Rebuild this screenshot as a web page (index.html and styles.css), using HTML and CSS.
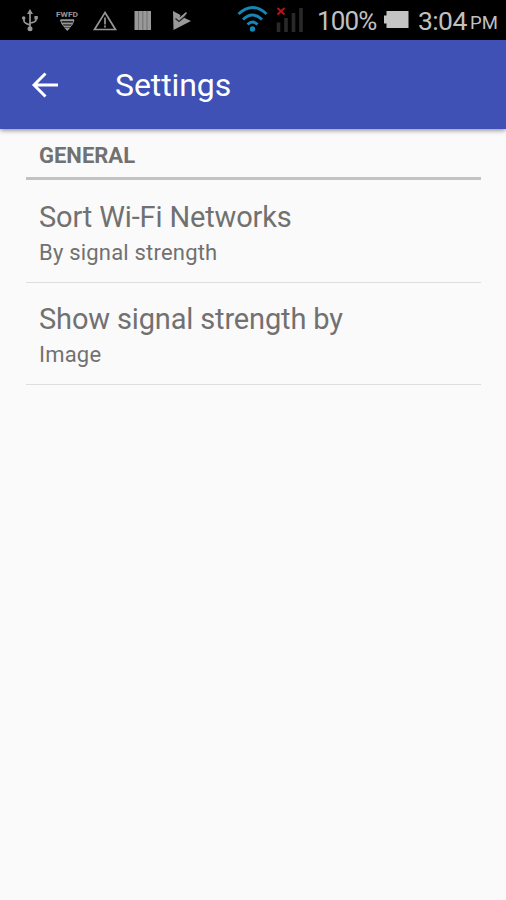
FILE: index.html
```html
<!DOCTYPE html>
<html lang="en">
<head>
<meta charset="utf-8">
<title>Settings</title>
<link rel="stylesheet" href="styles.css">
</head>
<body>
<div class="status">
  <svg class="notifications" width="180" height="24" viewBox="20 8 180 24" fill="none" stroke="#969696" stroke-width="1.7">
    <g>
      <path d="M30 13V28M24 17v4q0 2 6 4M36 17v3q0 2-6 3"/>
      <path d="M30 9l3 5h-6z" fill="#969696" stroke="none"/>
      <circle cx="30" cy="28.700" r="2.500" fill="#969696" stroke="none"/>
      <circle cx="23.700" cy="18" r="1.800" fill="#969696" stroke="none"/>
      <path d="M34.400 16h3.400v3.400h-3.400z" fill="#969696" stroke="none"/>
    </g>
    <g>
      <text class="badge-text" x="56" y="17" textLength="22" lengthAdjust="spacingAndGlyphs">FWFD</text>
      <path d="M60.500 20.300h13.500M62 23.600h10.500M64 26.600h6.500" stroke-width="2"/>
      <path d="M64.500 28h5.500l-2.700 3z" fill="#969696" stroke="none"/>
      <path d="M60.500 20l1.500 4 2.500 3M74 20l-1.500 4-2.500 3" stroke-width="1"/>
    </g>
    <path d="M105 12.500L115.500 29.500h-21zM105 17.500v7M105 25.500v2"/>
    <path d="M134.500 11H151v19h-16.500z" fill="#999" stroke="none"/>
    <path d="M138.500 11v19M142.800 11v19M147 11v19" stroke="#666" stroke-width=".8"/>
    <path d="M173 11l7.500 4-1 2.500 6.500-5.500 1 1-3.500 4.500 7.500 3.500-17.500 9z" fill="#999" stroke="none"/>
    <path d="M175.500 18.500l3.500 3 6.500-5.500" stroke="#222" stroke-width="1.200"/>
  </svg>
  <svg class="signal" width="68" height="28" viewBox="237 5 68 28" fill="none">
    <g stroke="#1686b6" stroke-width="2.900">
      <path d="M238.500 14Q252.500 1 266.500 14M243 19.500Q252.500 10.500 262 19.500M247.500 24.500Q252.500 19.500 257.500 24.500"/>
      <circle cx="252.500" cy="29" r="2.700" fill="#1686b6" stroke="none"/>
    </g>
    <path d="M278.500 32v-9.500M286 32V18M293.500 32V13M301 32V8" stroke="#292929" stroke-width="3.600"/>
    <path d="M277.500 8l7 6.500M284.500 8l-7 6.500" stroke="#b5161b" stroke-width="1.900"/>
  </svg>
  <span class="percent">100%</span>
  <svg class="battery" width="25" height="17" viewBox="0 0 25 17"><path d="M2.500 0H24.500V17H2.500V12.500H0V4.500H2.500z" fill="#c4c4c4"/></svg>
  <span class="clock">3:04</span>
  <span class="period">PM</span>
</div>
<header class="appbar">
  <svg class="back" width="28" height="26" viewBox="0 0 28 26" fill="none" stroke="#fff" stroke-width="2.900"><path d="M14.500 1.500L3 13l11.500 11.500M3 13H27"/></svg>
  <h1 class="title">Settings</h1>
</header>
<main class="settings">
  <h2 class="category">GENERAL</h2>
  <section class="preference">
    <div class="name">Sort Wi-Fi Networks</div>
    <div class="summary">By signal strength</div>
  </section>
  <section class="preference">
    <div class="name">Show signal strength by</div>
    <div class="summary">Image</div>
  </section>
</main>
</body>
</html>
```
FILE: styles.css
```css
* { box-sizing: border-box; }
body { margin: 0; height: 900px; overflow: hidden; background: #fafafa; font-family: Roboto, "Liberation Sans", sans-serif; color: #717171; }
svg { display: block; flex: none; }
.status { display: flex; height: 40px; padding-left: 20px; background: #000; color: #c0c0c0; white-space: nowrap; }
.notifications { margin-top: 8px; }
.badge-text { fill: #969696; stroke: none; font-size: 8px; font-weight: 700; }
.signal { margin: 5px 0 0 37px; }
.percent { width: 67px; margin-left: 12px; font-size: 26px; line-height: 43px; letter-spacing: -.9px; }
.battery { margin: 11px 0 0 0; }
.clock { width: 51px; margin-left: 9px; font-size: 26.500px; line-height: 41px; letter-spacing: -.6px; }
.period { margin-left: 1px; font-size: 18.500px; line-height: 47px; }
.appbar { position: relative; display: flex; align-items: center; height: 89px; padding-left: 31px; background: #3f51b5; color: #fff; box-shadow: 0 1px 5px rgba(0,0,0,.5); }
.title { margin: 1px 0 0 56px; font-size: 32px; line-height: 40px; font-weight: 400; letter-spacing: -.1px; }
.settings { padding: 0 25px 0 26px; }
.category { height: 51px; margin: 0; padding: 13px 13px 0; border-bottom: 3px solid #c2c2c2; font-size: 22px; line-height: 28px; font-weight: 700; }
.preference { height: 103px; padding: 17px 13px 0; border-bottom: 1px solid #dedede; }
.preference + .preference { height: 102px; padding-top: 16px; }
.name { font-size: 29px; line-height: 40px; letter-spacing: -.15px; }
.summary { padding-top: 1px; font-size: 22px; line-height: 30px; letter-spacing: .2px; }
```
